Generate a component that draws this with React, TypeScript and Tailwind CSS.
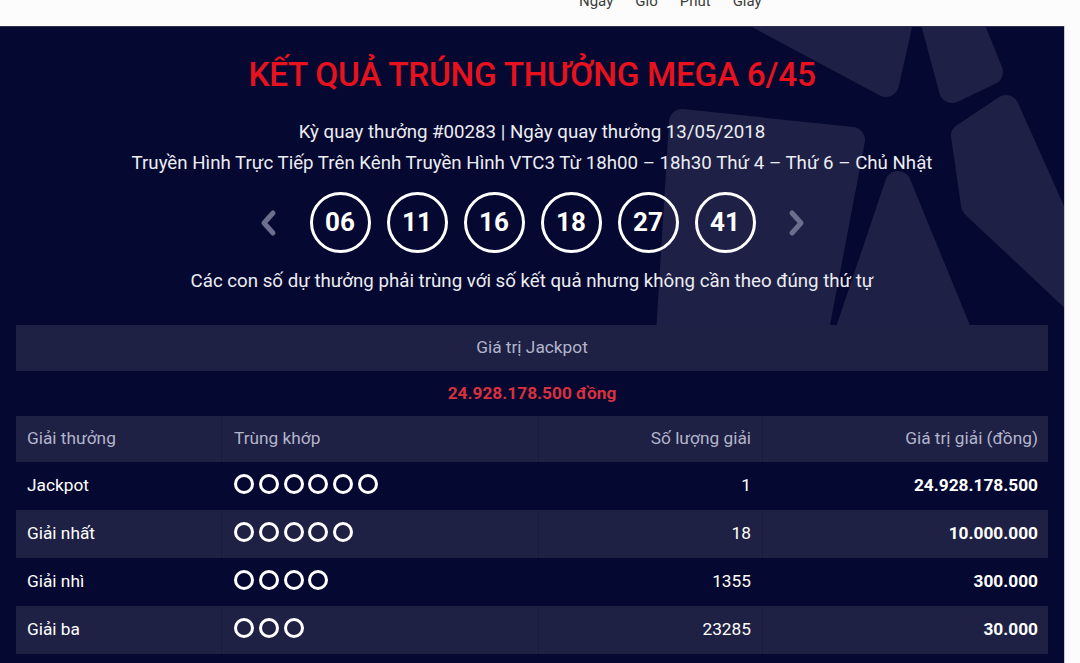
import React from "react";

const balls = ["06", "11", "16", "18", "27", "41"];

const rows = [
  { name: "Jackpot", match: 6, count: "1", value: "24.928.178.500" },
  { name: "Giải nhất", match: 5, count: "18", value: "10.000.000" },
  { name: "Giải nhì", match: 4, count: "1355", value: "300.000" },
  { name: "Giải ba", match: 3, count: "23285", value: "30.000" },
];

function Chevron({ dir }: { dir: "left" | "right" }) {
  return (
    <svg width="20" height="28" viewBox="0 0 20 28" className="shrink-0">
      {dir === "left" ? (
        <path d="M14 4 L5 14 L14 24" fill="none" stroke="#6c6e8c" strokeWidth="5" strokeLinecap="round" strokeLinejoin="round" />
      ) : (
        <path d="M6 4 L15 14 L6 24" fill="none" stroke="#6c6e8c" strokeWidth="5" strokeLinecap="round" strokeLinejoin="round" />
      )}
    </svg>
  );
}

function Background() {
  const c = "#1e2046";
  const common = { fill: c, stroke: c, strokeWidth: 26, strokeLinejoin: "round" as const };
  return (
    <svg
      className="absolute left-0 top-0 pointer-events-none"
      width="1065"
      height="637"
      viewBox="0 26 1065 637"
    >
      {/* top petal */}
      <polygon points="744,8 903,8 886,84" {...common} />
      {/* top-right petal */}
      <polygon points="930,8 964,8 990,72 952,90" {...common} />
      {/* right petal */}
      <polygon points="1006,108 1085,285 1085,300 1075,300 974,205 964,136" {...common} />
      {/* left petal */}
      <polygon points="682,122 852,140 812,350 668,350" {...common} />
      {/* bottom petal */}
      <polygon points="898,184 966,350 842,350" {...common} />
    </svg>
  );
}

export default function App() {
  return (
    <div className="w-[1080px] h-[663px] overflow-hidden bg-[#fcfcfc] font-['Roboto',_'Noto_Sans',_sans-serif]">
      <div className="h-[26px] overflow-hidden">
        <div className="flex gap-[22px] pl-[579px] -mt-[9px] text-[15px] leading-[20px] text-[#3c3c3c]">
          <span>Ngày</span>
          <span>Giờ</span>
          <span>Phút</span>
          <span>Giây</span>
        </div>
      </div>
      <div className="relative w-[1065px] h-[637px] bg-[#050830] border-r border-[#c9cad6] overflow-hidden">
        <Background />
        <div className="relative flex flex-col items-center px-[16px]">
          <div className="h-px w-[1065px] -mx-[16px] bg-[#2d2f55]" />
          <h1 className="mt-[29px] text-[33.4px] leading-[38px] font-medium text-[#e8121e] tracking-[-0.3px]">
            KẾT QUẢ TRÚNG THƯỞNG MEGA 6/45
          </h1>
          <p className="mt-[23px] text-[18.7px] leading-[31px] text-[#ecedf3]">
            Kỳ quay thưởng #00283 | Ngày quay thưởng 13/05/2018
          </p>
          <p className="text-[18.7px] leading-[31px] text-[#ecedf3]">
            Truyền Hình Trực Tiếp Trên Kênh Truyền Hình VTC3 Từ 18h00 – 18h30 Thứ 4 – Thứ 6 – Chủ Nhật
          </p>
          <div className="mt-[13px] flex items-center">
            <Chevron dir="left" />
            <div className="ml-[31px] mr-[30px] flex gap-[16px]">
              {balls.map((b) => (
                <div
                  key={b}
                  className="w-[61px] h-[61px] rounded-full border-[3.5px] border-white flex items-center justify-center text-[26px] font-bold text-white"
                >
                  {b}
                </div>
              ))}
            </div>
            <Chevron dir="right" />
          </div>
          <p className="mt-[13px] text-[18.7px] leading-[31px] text-[#ecedf3]">
            Các con số dự thưởng phải trùng với số kết quả nhưng không cần theo đúng thứ tự
          </p>
          <div className="mt-[28px] w-full">
            <div className="h-[46px] bg-[#1e2044] flex items-center justify-center text-[17.3px] text-[#b3b5cb]">
              Giá trị Jackpot
            </div>
            <div className="h-[45px] flex items-center justify-center text-[17.3px] font-bold text-[#d8303f]">
              24.928.178.500 đồng
            </div>
            <div className="grid grid-cols-[205px_317px_224px_287px] h-[46px] bg-[#1e2044] text-[17.3px] text-[#b3b5cb]">
              <div className="flex items-center pl-[11px]">Giải thưởng</div>
              <div className="flex items-center pl-[12px] border-l border-[#191b3c]">Trùng khớp</div>
              <div className="flex items-center justify-end pr-[11px] border-l border-[#191b3c]">Số lượng giải</div>
              <div className="flex items-center justify-end pr-[11px] border-l border-[#191b3c]">Giá trị giải (đồng)</div>
            </div>
            {rows.map((r, i) => (
              <div
                key={r.name}
                className={
                  "grid grid-cols-[205px_317px_224px_287px] h-[48px] text-[17.3px] text-white " +
                  (i % 2 === 1 ? "bg-[#1e2044]" : "bg-[#050830]")
                }
              >
                <div className="flex items-center pl-[11px]">{r.name}</div>
                <div className={"flex items-center pl-[12px] gap-[4.8px] border-l " + (i % 2 === 1 ? "border-[#191b3c]" : "border-transparent")}>
                  {Array.from({ length: r.match }).map((_, k) => (
                    <span key={k} className="w-[20px] h-[20px] rounded-full border-[3px] border-white -mt-[4px]" />
                  ))}
                </div>
                <div className={"flex items-center justify-end pr-[11px] border-l " + (i % 2 === 1 ? "border-[#191b3c]" : "border-transparent")}>
                  {r.count}
                </div>
                <div className={"flex items-center justify-end pr-[11px] font-bold border-l " + (i % 2 === 1 ? "border-[#191b3c]" : "border-transparent")}>
                  {r.value}
                </div>
              </div>
            ))}
          </div>
        </div>
      </div>
    </div>
  );
}
